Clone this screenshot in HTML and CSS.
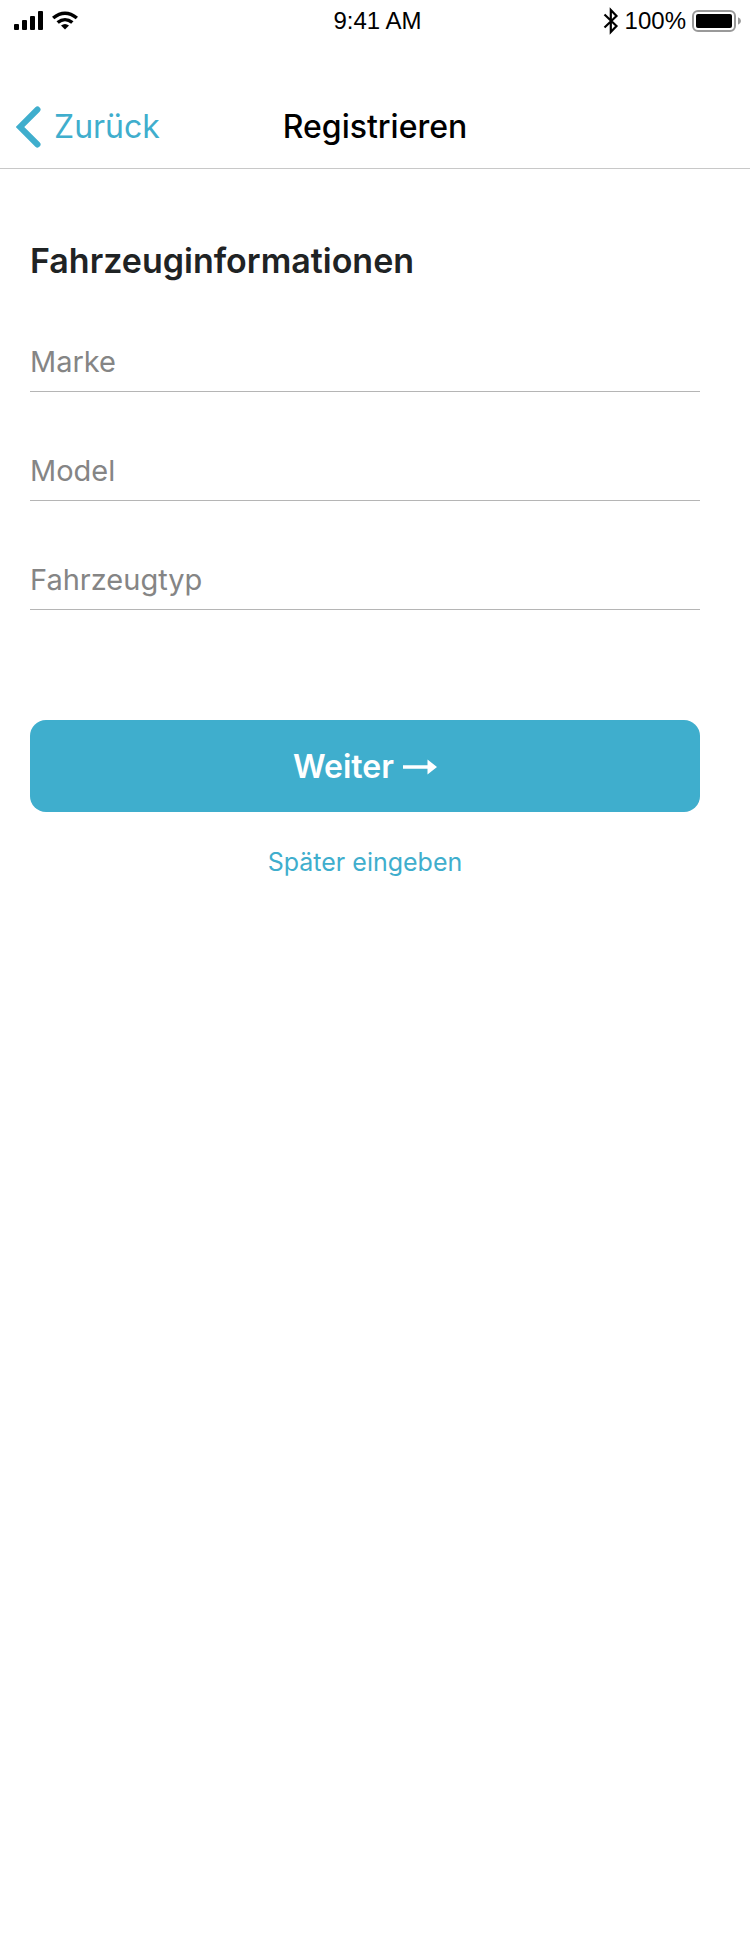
FILE: index.html
```html
<!DOCTYPE html>
<html lang="de">
<head>
<meta charset="utf-8">
<meta name="viewport" content="width=device-width, initial-scale=1">
<title>Registrieren</title>
<link rel="stylesheet" href="styles.css">
</head>
<body>
<div class="status">
  <div class="status-left">
    <svg width="30" height="20" viewBox="0 0 30 20" aria-hidden="true"><rect x="0" y="13" width="5" height="6" rx="1"/><rect x="8" y="9" width="5" height="10" rx="1"/><rect x="16" y="5" width="5" height="14" rx="1"/><rect x="24" y="0" width="5" height="19" rx="1"/></svg>
    <svg width="26" height="20" viewBox="0 0 26 20" aria-hidden="true"><path d="M0 5.8Q13-4.8 26 5.8L23.7 8.3Q13-.4 2.3 8.3ZM4.5 10.3Q13 3.5 21.5 10.3L19.2 12.8Q13 7.8 6.8 12.8ZM9 14.6Q13 11.2 17 14.6L13 18.5Z"/></svg>
  </div>
  <span>9:41 AM</span>
  <div class="status-right">
    <svg width="16" height="28" viewBox="0 0 16 28" aria-hidden="true"><path d="M1.5 7.5 13.5 19 7.8 25V3L13.5 9 1.5 20.5" fill="none" stroke="#000" stroke-width="2.2"/></svg>
    <span>100%</span>
    <svg width="49" height="22" viewBox="0 0 49 22" aria-hidden="true"><rect x="1" y="1" width="42" height="20" rx="5" fill="none" stroke="#999" stroke-width="2"/><rect x="4" y="4" width="36" height="14" rx="2"/><path d="M46 7.2Q49 8.4 49 11T46 14.8Z" fill="#999"/></svg>
  </div>
</div>
<header class="nav">
  <a class="back" href="#"><svg width="25" height="42" viewBox="0 0 25 42" aria-hidden="true"><path d="M21.5 3.5 3.9 21 21.5 38.5" fill="none" stroke="currentColor" stroke-width="6" stroke-linecap="round"/></svg>Zurück</a>
  <h1 class="title">Registrieren</h1>
</header>
<main class="content">
  <form class="form">
    <h2 class="heading">Fahrzeuginformationen</h2>
    <div class="fields">
      <input class="field" type="text" name="marke" placeholder="Marke" aria-label="Marke">
      <input class="field" type="text" name="model" placeholder="Model" aria-label="Model">
      <input class="field" type="text" name="fahrzeugtyp" placeholder="Fahrzeugtyp" aria-label="Fahrzeugtyp">
    </div>
    <button class="submit" type="button">Weiter<svg width="34" height="16" viewBox="0 0 34 16" aria-hidden="true"><path d="M0 6.2H24.5V.5L34 8 24.5 15.5V9.8H0Z" fill="currentColor"/></svg></button>
    <a class="later" href="#">Später eingeben</a>
  </form>
</main>
</body>
</html>
```
FILE: styles.css
```css
* {
  box-sizing: border-box;
}

body {
  margin: 0;
  min-height: 100vh;
  background: #fff;
  color: #000;
  font-family: Inter, "Liberation Sans", sans-serif;
}

.status {
  display: grid;
  grid-template-columns: 1fr auto 1fr;
  align-items: center;
  height: 42px;
  padding: 0 9px 0 14px;
  font: 24px/28px "Liberation Sans", Arial, sans-serif;
}

.status-left,
.status-right {
  display: flex;
  align-items: center;
}

.status-left {
  gap: 8px;
}

.status-right {
  justify-content: flex-end;
  gap: 6px;
}

.nav {
  display: grid;
  grid-template-columns: 1fr auto 1fr;
  align-items: center;
  height: 127px;
  padding: 44px 16px 0;
  border-bottom: 1px solid #c8c8c8;
}

.back {
  display: flex;
  align-items: center;
  gap: 13px;
  color: #3faecd;
  font-size: 32px;
  line-height: 40px;
  text-decoration: none;
}

.title {
  margin: 0;
  font-size: 32px;
  font-weight: 500;
  line-height: 40px;
}

.content {
  padding: 72px 50px 40px 30px;
}

.form {
  display: flex;
  flex-direction: column;
}

.heading {
  margin: 0;
  color: #1f2324;
  font-size: 34px;
  font-weight: 600;
  line-height: 40px;
}

.fields {
  display: grid;
  gap: 49px;
  margin-top: 51px;
}

.field {
  width: 100%;
  height: 60px;
  padding: 0;
  border: 0;
  border-bottom: 1px solid #b5b5b5;
  border-radius: 0;
  background: transparent;
  color: #1f2324;
  font: 29px/40px Inter, "Liberation Sans", sans-serif;
  outline: 0;
}

.field::placeholder {
  color: #858585;
  opacity: 1;
}

.submit {
  display: flex;
  align-items: center;
  justify-content: center;
  gap: 9px;
  height: 92px;
  margin-top: 110px;
  padding: 2px 0 0;
  border: 0;
  border-radius: 16px;
  background: #3faecd;
  color: #fff;
  font: 600 32px/40px Inter, "Liberation Sans", sans-serif;
}

.later {
  align-self: center;
  margin-top: 34px;
  color: #3faecd;
  font-size: 25px;
  line-height: 32px;
  text-decoration: none;
}
```
